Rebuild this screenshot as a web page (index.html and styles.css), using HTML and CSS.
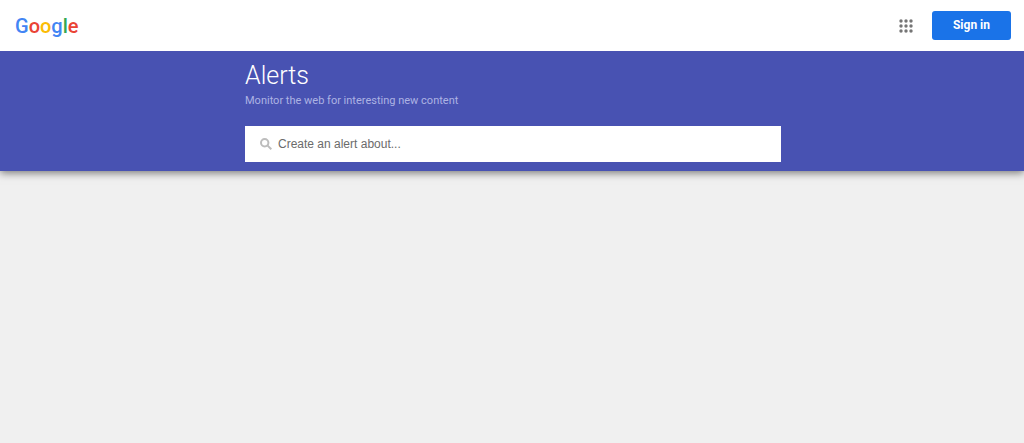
FILE: index.html
```html
<!DOCTYPE html>
<html lang="en">
<head>
    <meta charset="UTF-8">
    <meta name="viewport" content="width=device-width, initial-scale=1.0">
    <title>Google Alerts</title>
    <link rel="stylesheet" href="styles.css">
</head>
<body>
    <header class="top-bar">
        <a class="logo" href="#"><span class="blue">G</span><span class="red">o</span><span class="yellow">o</span><span class="blue">g</span><span class="green">l</span><span class="red">e</span></a>
        <div class="top-actions">
            <button class="apps-button" type="button" aria-label="Google apps">
                <svg width="14" height="14" viewBox="0 0 14 14" fill="#757575">
                    <circle cx="2" cy="2" r="1.7"/>
                    <circle cx="7" cy="2" r="1.7"/>
                    <circle cx="12" cy="2" r="1.7"/>
                    <circle cx="2" cy="7" r="1.7"/>
                    <circle cx="7" cy="7" r="1.7"/>
                    <circle cx="12" cy="7" r="1.7"/>
                    <circle cx="2" cy="12" r="1.7"/>
                    <circle cx="7" cy="12" r="1.7"/>
                    <circle cx="12" cy="12" r="1.7"/>
                </svg>
            </button>
            <a class="sign-in" href="#">Sign in</a>
        </div>
    </header>

    <main class="banner">
        <div class="banner-content">
            <h1>Alerts</h1>
            <p class="subtitle">Monitor the web for interesting new content</p>
            <form class="search-box">
                <label for="query" aria-label="Create an alert about...">
                    <svg width="12" height="12" viewBox="0 0 12 12" fill="none" stroke="#bdbdbd" stroke-width="2">
                        <circle cx="4.7" cy="4.7" r="3.7"/>
                        <path d="M7.4 7.4L11.3 11.3"/>
                    </svg>
                </label>
                <input id="query" type="text" placeholder="Create an alert about..." autocomplete="off">
            </form>
        </div>
    </main>
</body>
</html>
```

FILE: styles.css
```css
body {
    min-height: 100vh;
    margin: 0;
    background-color: #f0f0f0;
    font-family: Roboto, Arial, sans-serif;
}

.top-bar {
    position: relative;
    z-index: 1;
    display: flex;
    justify-content: space-between;
    align-items: center;
    height: 51px;
    padding: 0 13px 0 15px;
    background-color: #fff;
}

.logo {
    font-size: 20px;
    line-height: 24px;
    font-weight: 500;
    text-decoration: none;
}

.blue {
    color: #4285f4;
}

.red {
    color: #ea4335;
}

.yellow {
    color: #fbbc05;
}

.green {
    color: #34a853;
}

.top-actions {
    display: flex;
    align-items: center;
    gap: 12px;
}

.apps-button {
    display: flex;
    padding: 7px;
    border: none;
    background: none;
    cursor: pointer;
}

.sign-in {
    width: 79px;
    border-radius: 3px;
    background-color: #1a73e8;
    color: #fff;
    font-size: 12px;
    font-weight: bold;
    line-height: 29px;
    text-align: center;
    text-decoration: none;
}

.banner {
    position: relative;
    padding: 10px 15px 9px 17px;
    background-color: #4852b2;
    box-shadow: 0 2px 8px rgba(0, 0, 0, 0.5);
}

.banner-content {
    max-width: 536px;
    margin: 0 auto;
}

h1 {
    margin: 0;
    color: #fff;
    font-size: 25px;
    font-weight: 300;
    line-height: 30px;
}

.subtitle {
    margin: 2px 0 17px;
    color: #adb3e3;
    font-size: 11px;
    line-height: 16px;
}

.search-box {
    display: flex;
    align-items: center;
    gap: 6px;
    height: 36px;
    padding: 0 15px;
    background-color: #fff;
}

.search-box label {
    display: flex;
}

.search-box input {
    flex: 1;
    min-width: 0;
    padding: 0;
    border: none;
    outline: none;
    background: none;
    color: #333;
    font-family: "Liberation Sans", Arial, sans-serif;
    font-size: 12px;
    line-height: 20px;
}

.search-box input::placeholder {
    color: #6b6b6b;
    opacity: 1;
}
```
